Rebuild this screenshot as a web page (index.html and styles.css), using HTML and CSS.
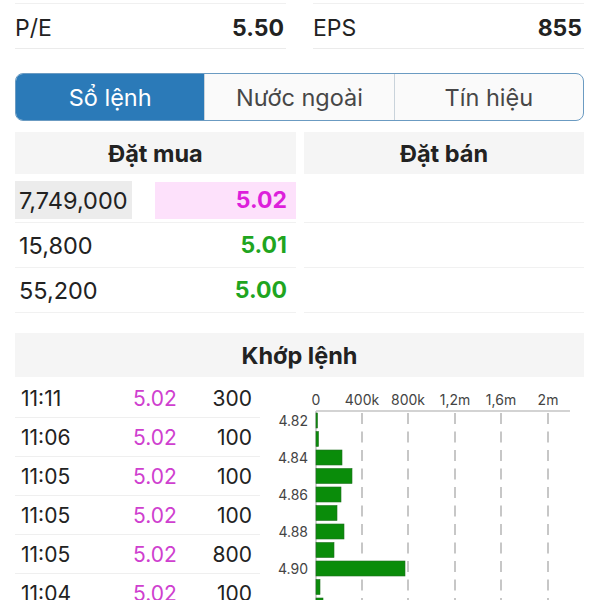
FILE: index.html
```html
<!DOCTYPE html>
<html lang="vi">
<head>
    <meta charset="UTF-8">
    <meta name="viewport" content="width=device-width, initial-scale=1.0">
    <title>Sổ lệnh</title>
    <link rel="stylesheet" href="styles.css">
</head>
<body>
    <div class="stats">
        <div class="stat"><span>P/E</span><b>5.50</b></div>
        <div class="stat"><span>EPS</span><b>855</b></div>
    </div>

    <div class="tabs">
        <div class="tab active">Sổ lệnh</div>
        <div class="tab">Nước ngoài</div>
        <div class="tab">Tín hiệu</div>
    </div>

    <div class="book">
        <div class="side">
            <div class="side-head">Đặt mua</div>
            <div class="book-row">
                <span class="qty top">7,749,000</span>
                <span class="price best">5.02</span>
            </div>
            <div class="book-row">
                <span class="qty">15,800</span>
                <span class="price up">5.01</span>
            </div>
            <div class="book-row">
                <span class="qty">55,200</span>
                <span class="price up">5.00</span>
            </div>
        </div>
        <div class="side">
            <div class="side-head">Đặt bán</div>
            <div class="book-row"></div>
            <div class="book-row"></div>
            <div class="book-row"></div>
        </div>
    </div>

    <div class="match">
        <div class="match-head">Khớp lệnh</div>
        <div class="match-body">
            <div class="trades">
                <div class="trade"><span>11:11</span><span class="t-price">5.02</span><span class="t-vol">300</span></div>
                <div class="trade"><span>11:06</span><span class="t-price">5.02</span><span class="t-vol">100</span></div>
                <div class="trade"><span>11:05</span><span class="t-price">5.02</span><span class="t-vol">100</span></div>
                <div class="trade"><span>11:05</span><span class="t-price">5.02</span><span class="t-vol">100</span></div>
                <div class="trade"><span>11:05</span><span class="t-price">5.02</span><span class="t-vol">800</span></div>
                <div class="trade"><span>11:04</span><span class="t-price">5.02</span><span class="t-vol">100</span></div>
            </div>
            <svg class="chart" width="320" height="222" viewBox="0 0 320 222">
                <g class="ticks">
                    <text x="46" y="26">0</text>
                    <text x="92" y="26">400k</text>
                    <text x="138" y="26">800k</text>
                    <text x="185" y="26">1,2m</text>
                    <text x="231" y="26">1,6m</text>
                    <text x="278" y="26">2m</text>
                </g>
                <g class="grid">
                    <line x1="92" y1="34" x2="92" y2="222"/>
                    <line x1="138" y1="34" x2="138" y2="222"/>
                    <line x1="185" y1="34" x2="185" y2="222"/>
                    <line x1="231" y1="34" x2="231" y2="222"/>
                    <line x1="278" y1="34" x2="278" y2="222"/>
                </g>
                <line class="axis" x1="46" y1="32" x2="300" y2="32"/>
                <line class="axis" x1="46" y1="32" x2="46" y2="222"/>
                <g class="bars">
                    <rect x="46" y="34" width="1.5" height="15"/>
                    <rect x="46" y="52.5" width="2.5" height="15"/>
                    <rect x="46" y="71" width="26" height="15"/>
                    <rect x="46" y="89.5" width="36" height="15"/>
                    <rect x="46" y="108" width="25" height="15"/>
                    <rect x="46" y="126.5" width="21" height="15"/>
                    <rect x="46" y="145" width="28" height="15"/>
                    <rect x="46" y="163.5" width="18" height="15"/>
                    <rect x="46" y="182" width="89" height="15"/>
                    <rect x="46" y="200.5" width="4" height="15"/>
                    <rect x="46" y="219" width="7" height="15"/>
                </g>
                <g class="levels">
                    <text x="38" y="47">4.82</text>
                    <text x="38" y="84">4.84</text>
                    <text x="38" y="121">4.86</text>
                    <text x="38" y="158">4.88</text>
                    <text x="38" y="195">4.90</text>
                    <text x="38" y="232">4.92</text>
                </g>
            </svg>
        </div>
    </div>
</body>
</html>
```

FILE: styles.css
```css
body { margin: 0; width: 600px; height: 600px; overflow: hidden; background: #fff; color: #222; font-family: Inter, "Noto Sans", sans-serif; }

.stats { display: grid; grid-template-columns: 271px 271px; column-gap: 27px; padding: 3px 16px 0 15px; }
.stat { display: flex; justify-content: space-between; align-items: center; height: 46px; box-sizing: border-box; padding: 3px 2px 0 0; border-top: 1px solid #f0f0f0; border-bottom: 1px solid #ebebeb; font-size: 23px; }
.stat b { font-weight: 700; }

.tabs { display: flex; margin: 24px 16px 0 15px; height: 48px; border: 1.5px solid #6b9bc2; border-radius: 8px; overflow: hidden; background: #fafafa; box-sizing: border-box; }
.tab { flex: 1; display: flex; align-items: center; justify-content: center; font-size: 23.5px; color: #474747; border-left: 1px solid #c9d3db; }
.tab:first-child { border-left: none; }
.tab.active { background: #2b7ab8; color: #fff; }

.book { display: grid; grid-template-columns: 281px 280px; column-gap: 8px; padding: 11px 16px 0 15px; }
.side-head { height: 42px; display: flex; align-items: center; justify-content: center; background: #f5f5f5; font-size: 23.5px; font-weight: 700; margin-bottom: 4px; }
.book-row { height: 44px; border-bottom: 1px solid #f1f1f1; display: flex; align-items: center; justify-content: space-between; font-size: 23.5px; }
.qty { padding-left: 4px; }
.qty.top { background: #ececec; width: 113px; height: 38px; display: flex; align-items: center; }
.price { font-weight: 700; padding-right: 9px; font-size: 23px; }
.price.best { background: #fde1fb; color: #dd1fdb; width: 132px; height: 37px; display: flex; align-items: center; justify-content: flex-end; }
.price.up { color: #1fa51f; }

.match { margin: 20px 16px 0 15px; }
.match-head { height: 44px; display: flex; align-items: center; justify-content: center; background: #f5f5f5; font-size: 23.5px; font-weight: 700; }
.match-body { display: flex; margin-top: 2px; }
.trades { width: 245px; flex-shrink: 0; }
.trade { display: grid; grid-template-columns: 112px 60px 1fr; align-items: center; height: 38px; padding: 0 8px 0 6px; border-bottom: 1px solid #efefef; font-size: 21px; }
.t-price { color: #cf3fcf; }
.t-vol { text-align: right; }

.chart { margin-left: 10px; flex-shrink: 0; }
.chart text { font-family: Inter, "Noto Sans", sans-serif; font-size: 14px; fill: #444; }
.ticks text { text-anchor: middle; }
.levels text { text-anchor: end; }
.grid line { stroke: #b5b5b5; stroke-width: 1.5; stroke-dasharray: 11 7.5; }
.axis { stroke: #c4c4c4; stroke-width: 1.5; }
.bars rect { fill: #0a8c0a; stroke: #1f6e1f; stroke-width: 0.6; }
```
